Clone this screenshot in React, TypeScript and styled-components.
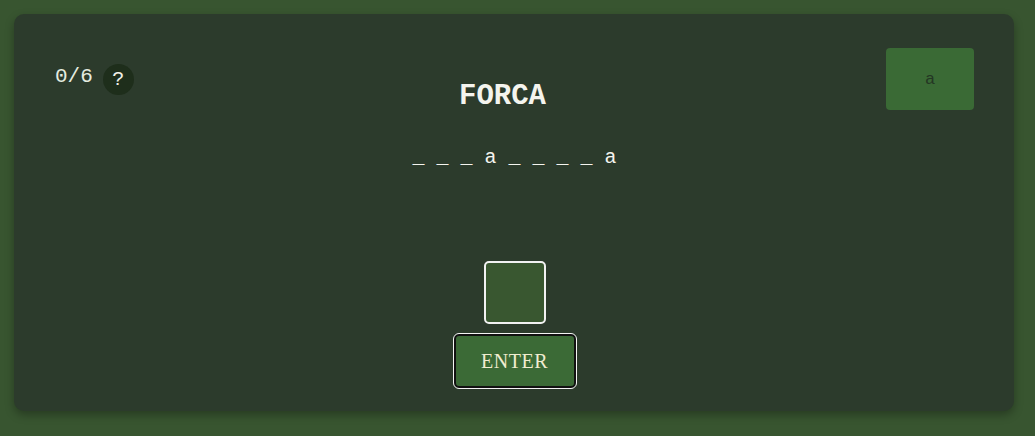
import React from "react";
import styled, { createGlobalStyle } from "styled-components";

const Global = createGlobalStyle`
  html, body { margin: 0; padding: 0; background: #385530; }
  body { font-family: "Courier New", Courier, "Liberation Mono", monospace; }
`;

const Page = styled.div`
  padding: 14px 21px 25px 14px;
  box-sizing: border-box;
  width: 1035px;
  height: 436px;
`;

const Card = styled.div`
  background: #2c3b2c;
  border-radius: 10px;
  box-shadow: 0 4px 10px rgba(0, 0, 0, 0.3);
  height: 397px;
  box-sizing: border-box;
  padding: 34px 40px 23px 41px;
  display: flex;
  flex-direction: column;
  align-items: center;
`;

const TopRow = styled.div`
  align-self: stretch;
  display: grid;
  grid-template-columns: 1fr auto 1fr;
  align-items: start;
`;

const Counter = styled.div`
  display: flex;
  align-items: center;
  gap: 10px;
  padding-top: 10px;
  color: #e4ece0;
  font-size: 21px;
`;

const Help = styled.div`
  width: 31px;
  height: 31px;
  border-radius: 50%;
  background: #1e2e1b;
  color: #f0f0e8;
  display: flex;
  align-items: center;
  justify-content: center;
  font-size: 20px;
  margin-top: 6px;
`;

const Title = styled.h1`
  margin: 34px 24px 0 0;
  font-family: "Courier New", Courier, "Liberation Mono", monospace;
  font-weight: bold;
  font-size: 29px;
  color: #f4f4ee;
  line-height: 1;
`;

const Guessed = styled.div`
  justify-self: end;
  width: 88px;
  height: 62px;
  border-radius: 4px;
  background: #3a6a35;
  color: #243624;
  display: flex;
  align-items: center;
  justify-content: center;
  font-size: 17px;
`;

const Word = styled.div`
  margin-top: 35px;
  color: #f4f4ee;
  font-size: 20px;
  white-space: pre;
`;

const Spacer = styled.div`
  flex: 1;
`;

const LetterInput = styled.input`
  width: 62px;
  height: 63px;
  box-sizing: border-box;
  border: 2px solid #f2f2f2;
  border-radius: 5px;
  background: #395730;
  color: #fff;
  text-align: center;
  font-size: 24px;
  outline: none;
`;

const EnterButton = styled.button`
  margin-top: 10px;
  width: 122px;
  height: 54px;
  box-sizing: border-box;
  border: 2px solid #111;
  outline: 1px solid #f4f4f4;
  outline-offset: 0;
  border-radius: 5px;
  background: #3b6a36;
  color: #f1ecd0;
  font-family: "Liberation Serif", serif;
  font-size: 20px;
  letter-spacing: 0.5px;
`;

export default function App() {
  return (
    <Page>
      <Global />
      <Card>
        <TopRow>
          <Counter>
            <span>0/6</span>
            <Help>?</Help>
          </Counter>
          <Title>FORCA</Title>
          <Guessed>a</Guessed>
        </TopRow>
        <Word>_ _ _ a _ _ _ _ a</Word>
        <Spacer />
        <LetterInput maxLength={1} />
        <EnterButton>ENTER</EnterButton>
      </Card>
    </Page>
  );
}
